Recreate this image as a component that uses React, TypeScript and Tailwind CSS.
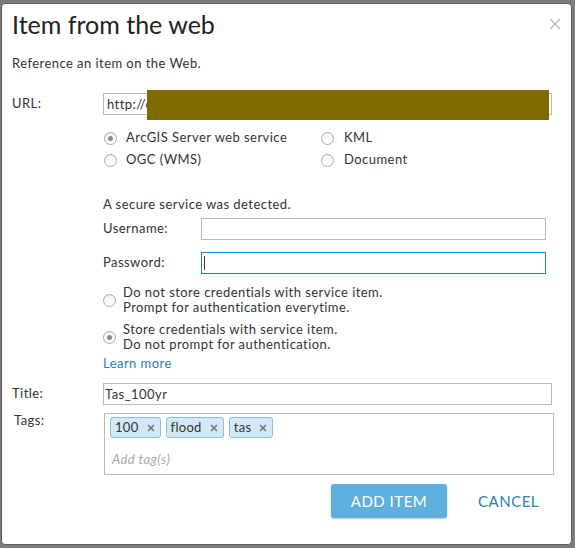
import { X } from "lucide-react";

const font = { fontFamily: "Lato, 'Open Sans', sans-serif" };

function Radio({ checked }: { checked?: boolean }) {
  return (
    <span className="flex size-[13px] shrink-0 items-center justify-center rounded-full border border-[#a9a9a9] bg-gradient-to-b from-[#f4f4f4] to-white">
      {checked && <span className="size-[5px] rounded-full bg-[#8a8a8a]" />}
    </span>
  );
}

function Tag({ label }: { label: string }) {
  return (
    <span className="flex h-[21px] items-center gap-[7px] rounded-[3px] border border-[#86c0e6] bg-[#d3e9f8] pl-[4px] pr-[4px] text-[13px] tracking-[0.3px] text-[#333]">
      {label}
      <X className="size-[10px] text-[#777]" strokeWidth={4} />
    </span>
  );
}

export default function App() {
  return (
    <div className="h-[548px] w-[575px] bg-[#7c7c7c] pl-[1px] pt-[3px]" style={font}>
      <div className="relative h-[542px] w-[571px] rounded-[4px] border border-[#5c5c5c] bg-white pl-[10px] text-[13px] tracking-[0.45px] text-[#333]">
        <div className="flex items-start justify-between pr-[7px] pt-[2px]">
          <h1 className="text-[25px] leading-[36px] tracking-normal text-[#222]">Item from the web</h1>
          <X className="mt-[9px] size-[18px] text-[#b3b3b3]" strokeWidth={1.6} />
        </div>

        <p className="mt-[13px] leading-[16px]">Reference an item on the Web.</p>

        <div className="mt-[22px] flex items-center">
          <span className="w-[91px]">URL:</span>
          <div className="relative h-[22px] w-[449px] border border-[#b8b8b8] pl-[3px] leading-[20px]">
            http://c
            <span className="absolute left-[43px] top-[-4px] h-[30px] w-[402px] bg-[#7f6a00]" />
          </div>
        </div>

        <div className="ml-[92px] mt-[15px] grid w-[320px] grid-cols-[217px_1fr] gap-y-[6px]">
          <label className="flex h-[16px] items-center gap-[9px]"><Radio checked />ArcGIS Server web service</label>
          <label className="flex h-[16px] items-center gap-[10px]"><Radio />KML</label>
          <label className="flex h-[16px] items-center gap-[9px]"><Radio />OGC (WMS)</label>
          <label className="flex h-[16px] items-center gap-[10px]"><Radio />Document</label>
        </div>

        <div className="ml-[91px] mt-[28px] w-[443px]">
          <p className="leading-[16px]">A secure service was detected.</p>
          <div className="mt-[6px] flex items-center">
            <span className="w-[98px]">Username:</span>
            <div className="h-[22px] flex-1 border border-[#b8b8b8]" />
          </div>
          <div className="mt-[12px] flex items-center">
            <span className="w-[98px]">Password:</span>
            <div className="flex h-[22px] flex-1 items-center border border-[#1b7fc3] pl-[2px]">
              <span className="h-[14px] w-px bg-[#333]" />
            </div>
          </div>
          <label className="mt-[11px] flex items-center gap-[7px] leading-[15px]">
            <Radio />
            <span>Do not store credentials with service item.<br />Prompt for authentication everytime.</span>
          </label>
          <label className="mt-[7px] flex items-center gap-[7px] leading-[15px]">
            <Radio checked />
            <span>Store credentials with service item.<br />Do not prompt for authentication.</span>
          </label>
          <p className="mt-[3px] leading-[16px] text-[#2a7fb5]">Learn more</p>
        </div>

        <div className="mt-[12px] flex items-center">
          <span className="w-[91px]">Title:</span>
          <div className="h-[22px] w-[449px] border border-[#b8b8b8] pl-[1px] leading-[20px]">Tas_100yr</div>
        </div>

        <div className="mt-[8px] flex items-start">
          <span className="w-[92px] pl-[2px] leading-[14px]">Tags:</span>
          <div className="h-[62px] w-[450px] border border-[#b8b8b8] px-[5px] pt-[3px]">
            <div className="flex gap-[5px]">
              <Tag label="100" />
              <Tag label="flood" />
              <Tag label="tas" />
            </div>
            <p className="mt-[12px] pl-[2px] italic text-[#a8a8a8]">Add tag(s)</p>
          </div>
        </div>

        <div className="mt-[9px] flex items-center">
          <button className="ml-[319px] h-[34px] w-[116px] rounded-[3px] bg-[#5eaede] text-[15px] tracking-[0.5px] text-white shadow-[0_1px_2px_rgba(0,0,0,0.25)]">
            ADD ITEM
          </button>
          <span className="ml-[31px] text-[15px] tracking-[0.5px] text-[#2a7fb5]">CANCEL</span>
        </div>
      </div>
    </div>
  );
}
